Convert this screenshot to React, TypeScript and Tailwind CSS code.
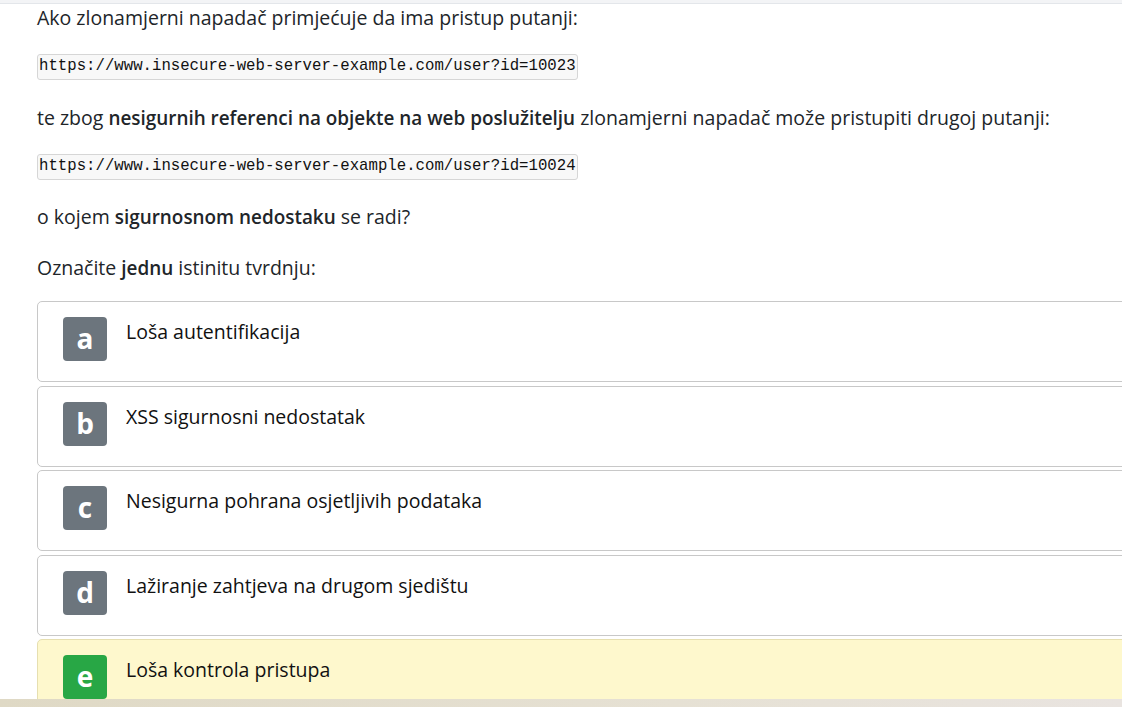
import React from "react";

const options = [
  { letter: "a", text: "Loša autentifikacija", selected: false },
  { letter: "b", text: "XSS sigurnosni nedostatak", selected: false },
  { letter: "c", text: "Nesigurna pohrana osjetljivih podataka", selected: false },
  { letter: "d", text: "Lažiranje zahtjeva na drugom sjedištu", selected: false },
  { letter: "e", text: "Loša kontrola pristupa", selected: true },
];

function Code({ children }: { children: React.ReactNode }) {
  return (
    <div className="flex h-[26px]">
      <code className="flex h-[26px] items-center rounded-[3px] border border-[#d6d6d6] bg-[#f8f8f8] px-[1px] text-[15.7px] text-[#111] [font-family:'Liberation_Mono',monospace]">
        {children}
      </code>
    </div>
  );
}

export default function App() {
  return (
    <div className="relative h-[707px] w-[1122px] overflow-hidden bg-white text-[19.5px] text-[#212529] [font-family:'Open_Sans','Noto_Sans',sans-serif]">
      <div className="h-[4px] border-b border-[#e3e6ea] bg-[#f3f4f6]" />
      <div className="w-[1200px] pl-[37px]">
        <p className="mb-[23px] h-[27px] leading-[27px]">Ako zlonamjerni napadač primjećuje da ima pristup putanji:</p>
        <div className="mb-[24px]">
          <Code>https://www.insecure-web-server-example.com/user?id=10023</Code>
        </div>
        <p className="mb-[23px] h-[27px] leading-[27px]">
          te zbog <b className="text-[18.9px] font-semibold">nesigurnih referenci na objekte na web poslužitelju</b> zlonamjerni napadač može pristupiti drugoj putanji:
        </p>
        <div className="mb-[23px]">
          <Code>https://www.insecure-web-server-example.com/user?id=10024</Code>
        </div>
        <p className="mb-[24px] h-[27px] leading-[27px]">
          o kojem <b className="text-[18.9px] font-semibold">sigurnosnom nedostaku</b> se radi?
        </p>
        <p className="mb-[20px] h-[27px] leading-[27px]">
          Označite <b className="text-[18.9px] font-semibold">jednu</b> istinitu tvrdnju:
        </p>
        <div className="flex flex-col gap-[3.5px]">
          {options.map((o) => (
            <div
              key={o.letter}
              className={`flex h-[81px] items-start gap-[19px] rounded-[5px] border pl-[25px] pt-[15px] ${
                o.selected ? "border-[#e6dfb0] bg-[#fef8cd]" : "border-[#c8c8c8] bg-white"
              }`}
            >
              <div
                className={`flex h-[44px] w-[44px] items-center justify-center rounded-[4px] pb-[2px] text-[28px] font-bold leading-none text-white [font-family:'Open_Sans',sans-serif] ${
                  o.selected ? "bg-[#28a745]" : "bg-[#6c757d]"
                }`}
              >
                {o.letter}
              </div>
              <div className="pt-[1px] leading-[27px] text-[#111]">{o.text}</div>
            </div>
          ))}
        </div>
      </div>
      <div className="absolute bottom-0 left-0 h-[8px] w-full bg-[linear-gradient(90deg,#dfd9c5,#e6e1d4_60%,#e9e4e0)]" />
    </div>
  );
}
